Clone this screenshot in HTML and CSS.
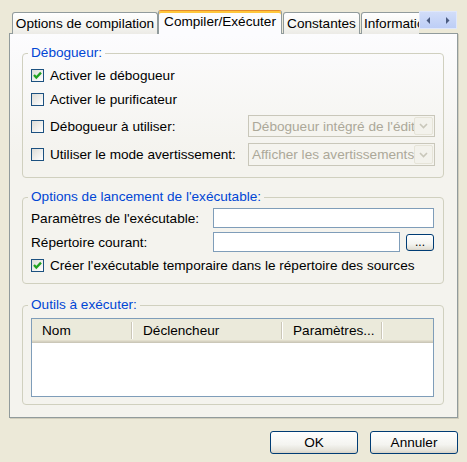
FILE: index.html
```html
<!DOCTYPE html>
<html lang="fr">
<head>
<meta charset="utf-8">
<title>Options</title>
<link rel="stylesheet" href="styles.css">
</head>
<body>
<div class="dialog">
  <div class="tabstrip">
    <div class="tabs">
      <div class="tab t1">Options de compilation</div>
      <div class="tab selected">Compiler/Exécuter</div>
      <div class="tab t3">Constantes</div>
      <div class="tab t4">Informations</div>
    </div>
    <div class="tabscroll">
      <span class="sbtn"><svg width="5" height="7" viewBox="0 0 5 7"><path d="M4 0 L4 7 L0.5 3.5 Z" fill="#4a5b80"/></svg></span>
      <span class="sbtn"><svg width="5" height="7" viewBox="0 0 5 7"><path d="M1 0 L1 7 L4.5 3.5 Z" fill="#4a5b80"/></svg></span>
    </div>
  </div>

  <div class="panel">
    <fieldset class="group g1">
      <legend>Débogueur:</legend>
      <div class="row r1">
        <span class="cb checked"><svg width="11" height="11" viewBox="0 0 11 11"><polyline points="2,5 4.3,7.5 9,2.6" fill="none" stroke="#21a121" stroke-width="2.3"/></svg></span>
        <span>Activer le débogueur</span>
      </div>
      <div class="row r2">
        <span class="cb"></span>
        <span>Activer le purificateur</span>
      </div>
      <div class="row r3">
        <span class="cb"></span>
        <span>Débogueur à utiliser:</span>
        <div class="combo"><span class="ctext">Débogueur intégré de l'éditeur</span><span class="cbtn"><svg width="9" height="6" viewBox="0 0 9 6"><polyline points="1,1 4.5,4.5 8,1" fill="none" stroke="#c9c7ba" stroke-width="1.6"/></svg></span></div>
      </div>
      <div class="row r4">
        <span class="cb"></span>
        <span>Utiliser le mode avertissement:</span>
        <div class="combo"><span class="ctext">Afficher les avertissements</span><span class="cbtn"><svg width="9" height="6" viewBox="0 0 9 6"><polyline points="1,1 4.5,4.5 8,1" fill="none" stroke="#c9c7ba" stroke-width="1.6"/></svg></span></div>
      </div>
    </fieldset>

    <fieldset class="group g2">
      <legend>Options de lancement de l'exécutable:</legend>
      <div class="frow f1">
        <span class="flabel">Paramètres de l'exécutable:</span>
        <div class="textbox wide"></div>
      </div>
      <div class="frow f2">
        <span class="flabel">Répertoire courant:</span>
        <div class="textbox narrow"></div>
        <button class="btn small">...</button>
      </div>
      <div class="row r5">
        <span class="cb checked"><svg width="11" height="11" viewBox="0 0 11 11"><polyline points="2,5 4.3,7.5 9,2.6" fill="none" stroke="#21a121" stroke-width="2.3"/></svg></span>
        <span>Créer l'exécutable temporaire dans le répertoire des sources</span>
      </div>
    </fieldset>

    <fieldset class="group g3">
      <legend>Outils à exécuter:</legend>
      <div class="listview">
        <div class="lvhead">
          <div class="col c1">Nom</div>
          <div class="col c2">Déclencheur</div>
          <div class="col c3">Paramètres...</div>
          <div class="col c4"></div>
        </div>
      </div>
    </fieldset>
  </div>

  <div class="actions">
    <button class="btn main">OK</button>
    <button class="btn main">Annuler</button>
  </div>
</div>
</body>
</html>
```

FILE: styles.css
```css
html, body {
  margin: 0;
  padding: 0;
}
body {
  width: 467px;
  height: 462px;
  overflow: hidden;
  background: #ece9d8;
  font-family: "Liberation Sans", Arial, sans-serif;
  font-size: 13.6px;
  color: #000;
}
.dialog {
  padding-top: 10px;
}

/* tabs */
.tabstrip {
  display: flex;
  height: 24px;
  margin-left: 12px;
}
.tabs {
  display: flex;
  align-items: flex-end;
  width: 407px;
  height: 24px;
  overflow: hidden;
}
.tab {
  box-sizing: border-box;
  flex: none;
  height: 22px;
  border: 1px solid #919b9c;
  border-bottom: none;
  border-radius: 3px 3px 0 0;
  background: linear-gradient(#ffffff, #f3f3ef 70%, #ecebe6);
  text-align: center;
  line-height: 20px;
  padding-top: 1px;
  white-space: nowrap;
}
.t1 { width: 146px; }
.t3 { width: 77px; margin-left: 1px; }
.t4 { width: 90px; margin-left: 1px; text-align: left; padding-left: 2px; }
.tab.selected {
  position: relative;
  z-index: 1;
  width: 124px;
  height: 24px;
  border-top: 1px solid #e68b2c;
  box-shadow: inset 0 2px 0 #ffc73c;
  background: #fcfcfe;
  line-height: 20px;
  padding-top: 1px;
}
.tabscroll {
  display: flex;
  margin-top: 1px;
  height: 18px;
  width: 38px;
  background: linear-gradient(#d3def9, #bccdf6);
  box-shadow: inset 0 0 0 1px #dfe7fb;
}
.sbtn {
  flex: 1;
  display: flex;
  align-items: center;
  justify-content: center;
}

/* panel */
.panel {
  box-sizing: border-box;
  margin-top: -1px;
  margin-left: 9px;
  width: 449px;
  height: 385px;
  border: 1px solid #919b9c;
  background: linear-gradient(#fcfcfe, #f4f3ee 120px, #f4f3ee);
  box-shadow: 1px 1px 0 #d0cdbd;
  padding: 11px 0 0 12px;
}
.group {
  box-sizing: border-box;
  width: 422px;
  margin: 0;
  padding: 0 8px;
  border: 1px solid #d0d0bf;
  border-radius: 4px;
  min-width: 0;
}
.group legend {
  color: #0046d5;
  padding: 0 3px;
  margin-left: -3px;
  line-height: 16px;
  height: 16px;
}
.g1 { padding-bottom: 11px; }
.g2 { margin-top: 11px; padding-bottom: 7px; }
.g3 { margin-top: 13px; padding-bottom: 7px; }

.row {
  display: flex;
  align-items: center;
  white-space: nowrap;
}
.r1 { height: 24px; margin-top: 2px; }
.r2 { height: 24px; }
.r3 { height: 22px; margin-top: 4px; }
.r4 { height: 23px; margin-top: 6px; }
.r5 { height: 22px; margin-top: 2px; }

.cb {
  box-sizing: border-box;
  flex: none;
  width: 13px;
  height: 13px;
  border: 1px solid #1c5180;
  background: linear-gradient(135deg, #dcdcd7, #ffffff);
  margin-right: 6px;
  display: flex;
}

.combo {
  box-sizing: border-box;
  margin-left: auto;
  width: 187px;
  flex: none;
  height: 100%;
  border: 1px solid #c9c7ba;
  background: #f5f4ef;
  display: flex;
  align-items: center;
  color: #aca899;
}
.ctext {
  flex: 1;
  overflow: hidden;
  white-space: nowrap;
  padding-left: 3px;
}
.cbtn {
  box-sizing: border-box;
  flex: none;
  width: 19px;
  height: calc(100% - 2px);
  margin-right: 1px;
  border: 1px solid #e6e4d8;
  border-radius: 2px;
  background: #f3f2ec;
  display: flex;
  align-items: center;
  justify-content: center;
}

.frow {
  display: flex;
  align-items: center;
  height: 20px;
}
.f1 { margin-top: 3px; }
.f2 { margin-top: 4px; }
.flabel {
  width: 182px;
  flex: none;
  white-space: nowrap;
}
.textbox {
  box-sizing: border-box;
  height: 20px;
  border: 1px solid #7f9db9;
  background: #fff;
}
.textbox.wide { width: 221px; }
.textbox.narrow { width: 187px; }

.btn {
  box-sizing: border-box;
  font: inherit;
  color: #000;
  border: 1px solid #003c74;
  border-radius: 3px;
  background: linear-gradient(#ffffff, #f4f4f0 60%, #e3e1d8 90%, #d6d0c5);
  padding: 0;
}
.btn.small {
  width: 28px;
  height: 17px;
  margin-left: 6px;
  font-size: 12px;
  line-height: 12px;
}

.listview {
  box-sizing: border-box;
  margin-top: 5px;
  width: 403px;
  height: 79px;
  border: 1px solid #7f9db9;
  background: #fff;
}
.lvhead {
  display: flex;
  height: 24px;
  background: linear-gradient(to top, #cbc7b8 0, #cbc7b8 1px, #d6d2c2 1px, #d6d2c2 2px, #e2decd 2px, #e2decd 3px, #ebeadb 3px);
}
.col {
  box-sizing: border-box;
  flex: none;
  height: 21px;
  padding: 2px 0 0 10px;
  line-height: 19px;
  white-space: nowrap;
  background: linear-gradient(to right, #cbc7b8 50%, #ffffff 50%) right 3px / 2px 17px no-repeat;
}
.c1 { width: 101px; }
.c2 { width: 150px; }
.c3 { width: 100px; }
.c4 { flex: 1; background: none; }

.actions {
  display: flex;
  justify-content: flex-end;
  gap: 12px;
  margin-top: 13px;
  padding-right: 9px;
}
.btn.main {
  width: 88px;
  height: 23px;
}
```
